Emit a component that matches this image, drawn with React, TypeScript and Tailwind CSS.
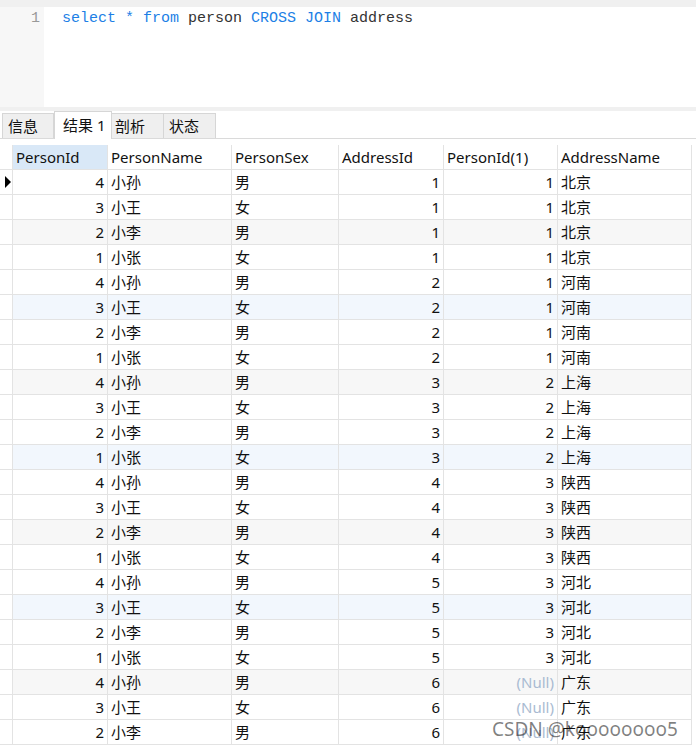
import React from 'react';

const persons = [
  { id: 4, name: '小孙', sex: '男' },
  { id: 3, name: '小王', sex: '女' },
  { id: 2, name: '小李', sex: '男' },
  { id: 1, name: '小张', sex: '女' },
];

const addresses = [
  { id: 1, personId: '1', name: '北京' },
  { id: 2, personId: '1', name: '河南' },
  { id: 3, personId: '2', name: '上海' },
  { id: 4, personId: '3', name: '陕西' },
  { id: 5, personId: '3', name: '河北' },
  { id: 6, personId: null, name: '广东' },
];

const rows = addresses.flatMap((a) => persons.map((p) => ({ p, a }))).slice(0, 23);

const headers = ['PersonId', 'PersonName', 'PersonSex', 'AddressId', 'PersonId(1)', 'AddressName'];

const font = { fontFamily: '"Noto Sans", "Noto Sans CJK SC", sans-serif' };

export default function App() {
  const rowBg = (i: number) => {
    if (i % 6 === 2) return 'bg-[#f7f7f7]';
    if (i % 6 === 5) return 'bg-[#f2f7fd]';
    return 'bg-white';
  };

  return (
    <div className="w-[696px] h-[747px] bg-white overflow-hidden relative text-[15px] text-[#111]" style={font}>
      {/* editor */}
      <div className="h-[7px] bg-[#f0f0f0]" />
      <div className="flex h-[100px]">
        <div className="w-[44px] bg-[#f7f7f7] text-right pr-[4px] pt-[2px] leading-[20px] text-[#999] font-['Liberation_Mono',monospace]">1</div>
        <div className="flex-1 pl-[18px] pt-[2px] leading-[20px] font-['Liberation_Mono',monospace] whitespace-pre">
          <span className="text-[#1d7fe6]">select * from</span>
          <span className="text-[#333]"> person </span>
          <span className="text-[#1d7fe6]">CROSS JOIN</span>
          <span className="text-[#333]"> address</span>
        </div>
      </div>
      <div className="h-[4px] bg-[#f0f0f0]" />

      {/* tabs */}
      <div className="h-[28px] flex items-end pl-[2px] border-b border-[#dadada]">
        <div className="w-[52px] h-[25px] bg-[#efefef] border border-b-0 border-[#d6d6d6] pl-[5px] leading-[24px]">信息</div>
        <div className="w-[58px] h-[28px] bg-white border border-b-0 border-[#d6d6d6] pl-[8px] leading-[26px] -mb-px relative">结果 1</div>
        <div className="w-[52px] h-[25px] bg-[#efefef] border border-b-0 border-l-0 border-[#d6d6d6] pl-[3px] leading-[24px]">剖析</div>
        <div className="w-[52px] h-[25px] bg-[#efefef] border border-b-0 border-l-0 border-[#d6d6d6] pl-[5px] leading-[24px]">状态</div>
      </div>
      <div className="h-[6px]" />

      {/* grid */}
      <div className="grid grid-cols-[13px_95px_124px_107px_105px_114px_134px] leading-[24px]">
        <div className="h-[25px] border-r border-b border-[#e3e3e3]" />
        {headers.map((h, i) => (
          <div
            key={h}
            className={`h-[25px] border-r border-b border-[#e3e3e3] pl-[3px] ${i === 0 ? 'bg-[#d9e8f7]' : 'bg-white'}`}
          >
            {h}
          </div>
        ))}
        {rows.map(({ p, a }, i) => (
          <React.Fragment key={i}>
            <div className="h-[25px] border-r border-b border-[#e3e3e3] bg-white flex items-center pl-[5px]">
              {i === 0 && <div className="w-0 h-0 border-y-[6px] border-y-transparent border-l-[6px] border-l-black" />}
            </div>
            <div className={`h-[25px] border-r border-b border-[#e3e3e3] text-right pr-[3px] ${rowBg(i)}`}>{p.id}</div>
            <div className={`h-[25px] border-r border-b border-[#e3e3e3] pl-[3px] ${rowBg(i)}`}>{p.name}</div>
            <div className={`h-[25px] border-r border-b border-[#e3e3e3] pl-[3px] ${rowBg(i)}`}>{p.sex}</div>
            <div className={`h-[25px] border-r border-b border-[#e3e3e3] text-right pr-[3px] ${rowBg(i)}`}>{a.id}</div>
            <div className={`h-[25px] border-r border-b border-[#e3e3e3] text-right pr-[3px] ${rowBg(i)}`}>
              {a.personId ?? <span className="text-[#a9bbd2]">(Null)</span>}
            </div>
            <div className={`h-[25px] border-r border-b border-[#e3e3e3] pl-[3px] ${rowBg(i)}`}>{a.name}</div>
          </React.Fragment>
        ))}
      </div>

      {/* watermark */}
      <div className="absolute left-[492px] top-[716px] text-[19px] leading-[26px] text-black/50 whitespace-nowrap">
        CSDN @koooooooo5
      </div>
    </div>
  );
}
